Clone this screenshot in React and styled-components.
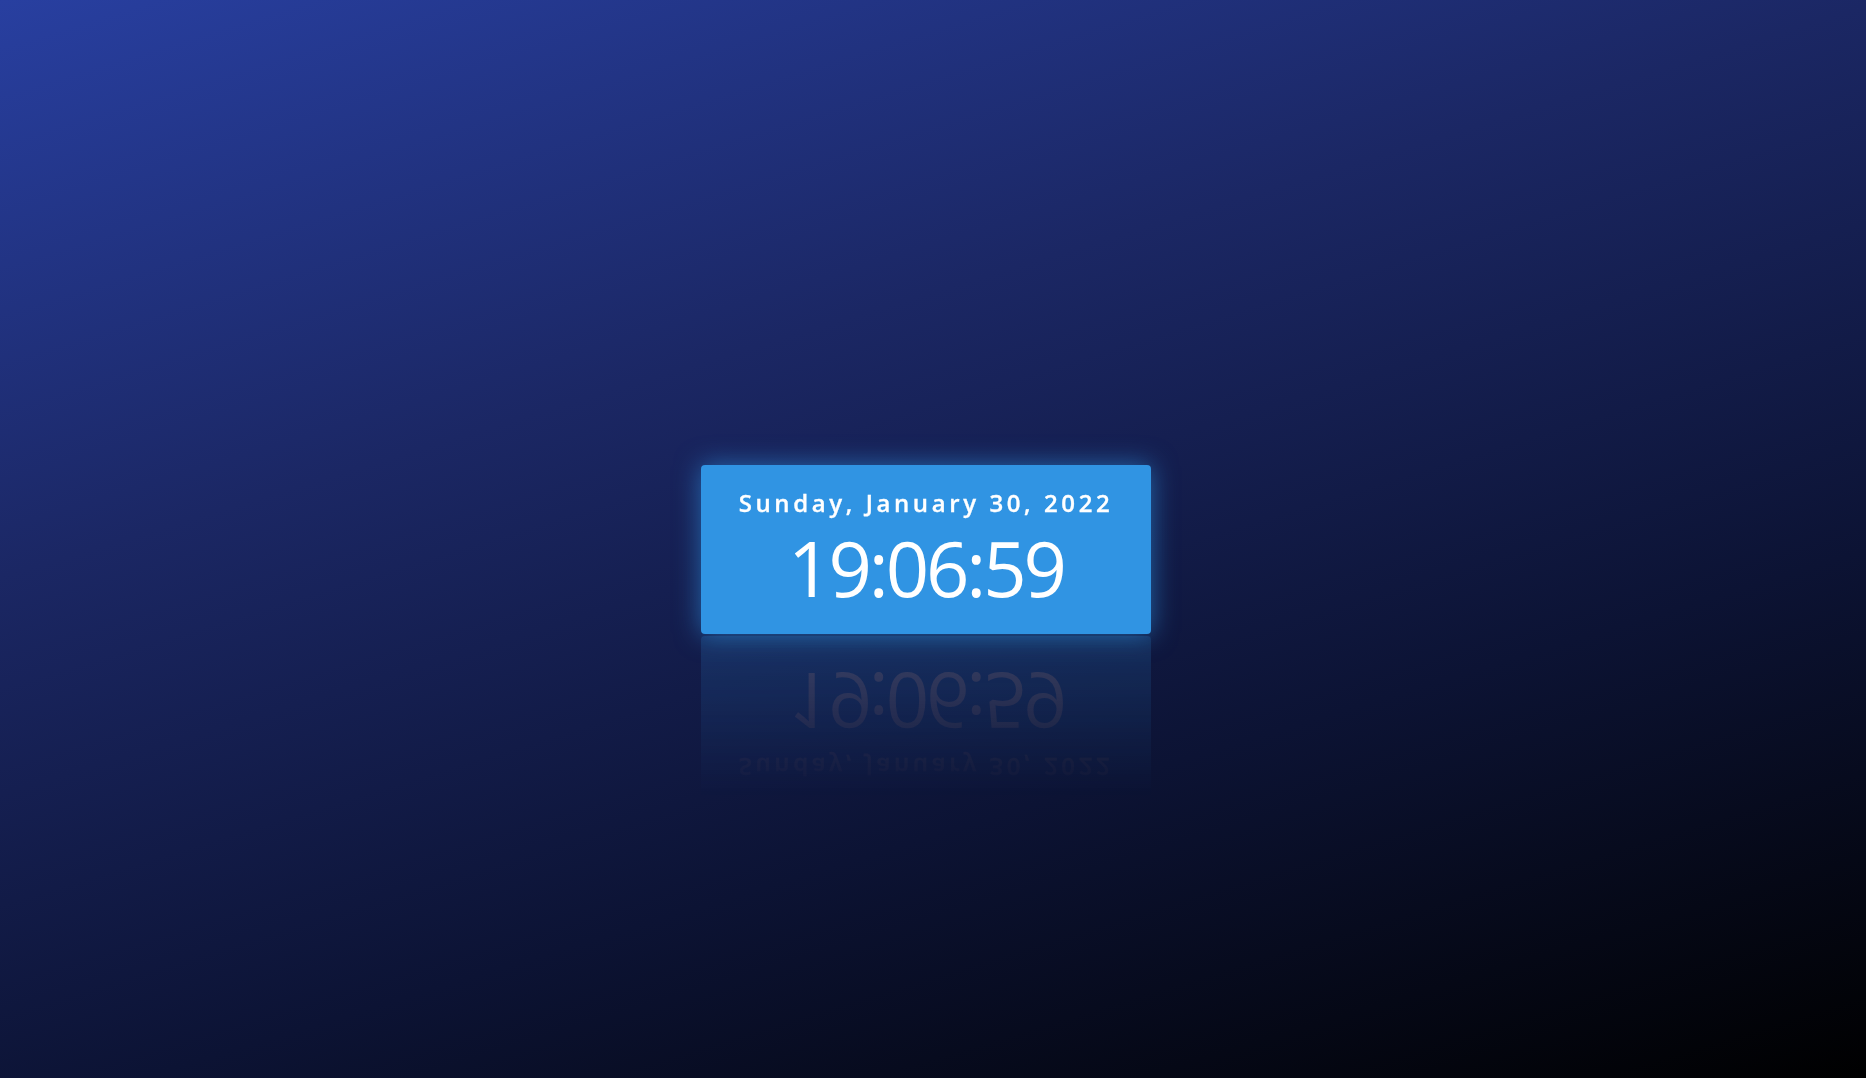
import React from "react";
import styled, { createGlobalStyle } from "styled-components";

const Global = createGlobalStyle`
  html, body { margin: 0; padding: 0; height: 100%; }
  body { overflow: hidden; font-family: "Open Sans", "Noto Sans", sans-serif; }
  * { box-sizing: border-box; }
`;

const Page = styled.main`
  width: 100vw;
  height: 100vh;
  display: flex;
  align-items: center;
  justify-content: center;
  padding: 21px 14px 0 0;
  background: linear-gradient(163deg, #283fa0 0%, #1b2764 35%, #0c1334 68%, #000000 100%);
`;

const Card = styled.section`
  width: 450px;
  height: 169px;
  border-radius: 4px;
  background: #3094e3;
  color: #ffffff;
  display: flex;
  flex-direction: column;
  align-items: center;
  padding-top: 22px;
  box-shadow: 0 0 26px rgba(48, 148, 227, 0.62);
  -webkit-box-reflect: below 2px linear-gradient(transparent 5%, rgba(0, 0, 0, 0.18) 100%);
`;

const DateLine = styled.div`
  font-size: 24px;
  line-height: 31px;
  font-weight: 600;
  letter-spacing: 3.6px;
  white-space: nowrap;
  -webkit-text-stroke: 0.3px #ffffff;
`;

const TimeLine = styled.div`
  margin-top: 10px;
  font-size: 76px;
  line-height: 80px;
  font-weight: 400;
  letter-spacing: -3.1px;
  white-space: nowrap;
`;

export default function App() {
  return (
    <>
      <Global />
      <Page>
        <Card>
          <DateLine>Sunday, January 30, 2022</DateLine>
          <TimeLine>19:06:59</TimeLine>
        </Card>
      </Page>
    </>
  );
}
